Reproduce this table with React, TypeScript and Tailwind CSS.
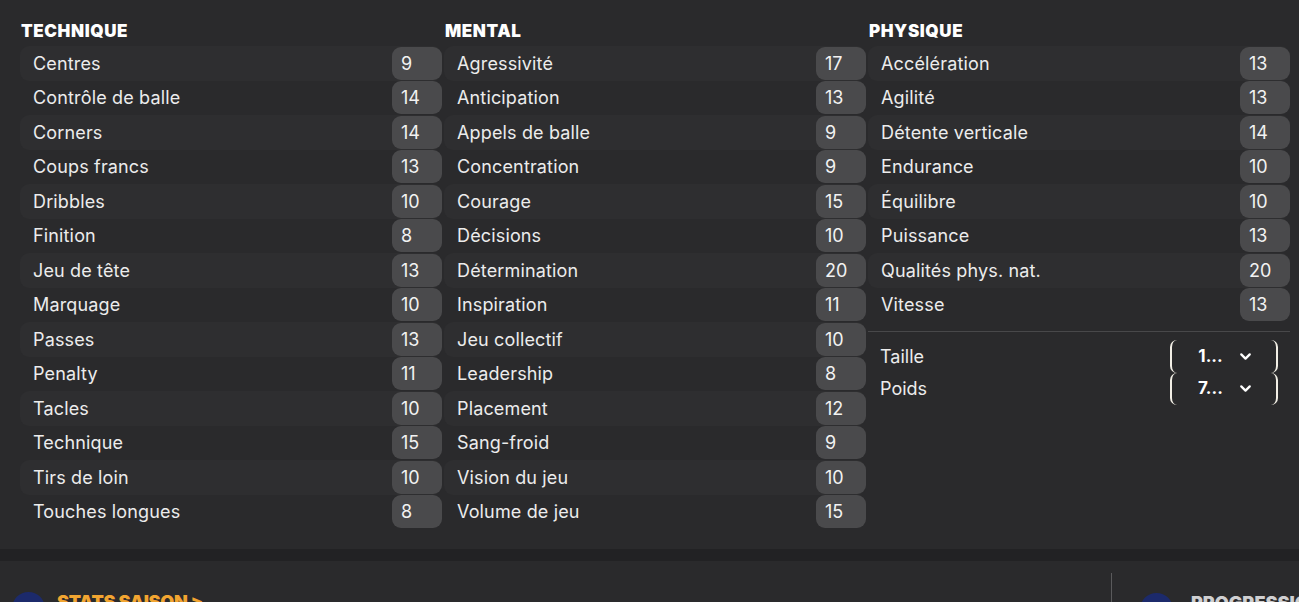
import React from "react";
import { ChevronDown } from "lucide-react";

type Attr = [string, number];

const technique: Attr[] = [
  ["Centres", 9],
  ["Contrôle de balle", 14],
  ["Corners", 14],
  ["Coups francs", 13],
  ["Dribbles", 10],
  ["Finition", 8],
  ["Jeu de tête", 13],
  ["Marquage", 10],
  ["Passes", 13],
  ["Penalty", 11],
  ["Tacles", 10],
  ["Technique", 15],
  ["Tirs de loin", 10],
  ["Touches longues", 8],
];

const mental: Attr[] = [
  ["Agressivité", 17],
  ["Anticipation", 13],
  ["Appels de balle", 9],
  ["Concentration", 9],
  ["Courage", 15],
  ["Décisions", 10],
  ["Détermination", 20],
  ["Inspiration", 11],
  ["Jeu collectif", 10],
  ["Leadership", 8],
  ["Placement", 12],
  ["Sang-froid", 9],
  ["Vision du jeu", 10],
  ["Volume de jeu", 15],
];

const physique: Attr[] = [
  ["Accélération", 13],
  ["Agilité", 13],
  ["Détente verticale", 14],
  ["Endurance", 10],
  ["Équilibre", 10],
  ["Puissance", 13],
  ["Qualités phys. nat.", 20],
  ["Vitesse", 13],
];

const Row = ({ label, value, odd }: { label: string; value: number; odd: boolean }) => (
  <div
    className={`flex h-[34.5px] items-center justify-between rounded-[9px] ${
      odd ? "bg-[#2e2e30]" : ""
    }`}
  >
    <span className="pl-[13px] text-[18px] tracking-[0.15px] text-[#ececec]">{label}</span>
    <span className="flex h-[33px] w-[50px] items-center rounded-[9px] bg-[#4a4a4c] pl-[9px] text-[18px] text-[#f2f2f2]">
      {value}
    </span>
  </div>
);

const Column = ({ title, items, children }: { title: string; items: Attr[]; children?: React.ReactNode }) => (
  <div className="flex flex-col">
    <h2 className="h-[18px] pl-px text-[17px] leading-[18px] font-black tracking-[0.6px] text-white">
      {title}
    </h2>
    <div className="mt-[6px] flex flex-col">
      {items.map(([l, v], i) => (
        <Row key={l} label={l} value={v} odd={i % 2 === 0} />
      ))}
    </div>
    {children}
  </div>
);

const Dropdown = ({ label, value }: { label: string; value: string }) => (
  <div className="flex h-[32.5px] items-center justify-between">
    <span className="pl-[12px] text-[18px] text-[#ececec]">{label}</span>
    <button className="mr-[12px] flex h-[32.5px] w-[108px] items-center justify-center gap-[14px] rounded-[7px] border-x-2 border-[#f2efe6] pl-[4px] text-[17px] font-bold text-white">
      <span>{value}</span>
      <ChevronDown size={17} strokeWidth={3.2} />
    </button>
  </div>
);

export default function App() {
  return (
    <div className="h-[602px] w-[1299px] overflow-hidden bg-[#2a2a2c] font-['Inter',sans-serif]">
      <div className="grid h-[549px] grid-cols-3 gap-x-[2px] pt-[22px] pr-[9px] pl-[20px]">
        <Column title="TECHNIQUE" items={technique} />
        <Column title="MENTAL" items={mental} />
        <Column title="PHYSIQUE" items={physique}>
          <div className="mt-[9px] h-px bg-[#48484a]" />
          <div className="mt-[8px] flex flex-col">
            <Dropdown label="Taille" value="1..." />
            <Dropdown label="Poids" value="7..." />
          </div>
        </Column>
      </div>
      <div className="h-[12px] bg-[#222224]" />
      <div className="flex h-[41px]">
        <div className="flex flex-1 items-start gap-[12px] pt-[31px] pl-[12px]">
          <div className="h-[33px] w-[33px] rounded-full bg-[#1c2a6b]" />
          <span className="mt-[1px] text-[18px] leading-[18px] font-black tracking-[-0.3px] text-[#f2a531]">
            STATS SAISON &gt;
          </span>
        </div>
        <div className="mt-[12px] w-px bg-[#5a5a5c]" />
        <div className="flex w-[187px] items-start gap-[18px] pt-[32px] pl-[28px]">
          <div className="h-[33px] w-[33px] shrink-0 rounded-full bg-[#1c2a6b]" />
          <span className="mt-[1px] text-[18px] leading-[18px] font-black whitespace-nowrap text-[#cfcfd1]">
            PROGRESSION
          </span>
        </div>
      </div>
    </div>
  );
}
